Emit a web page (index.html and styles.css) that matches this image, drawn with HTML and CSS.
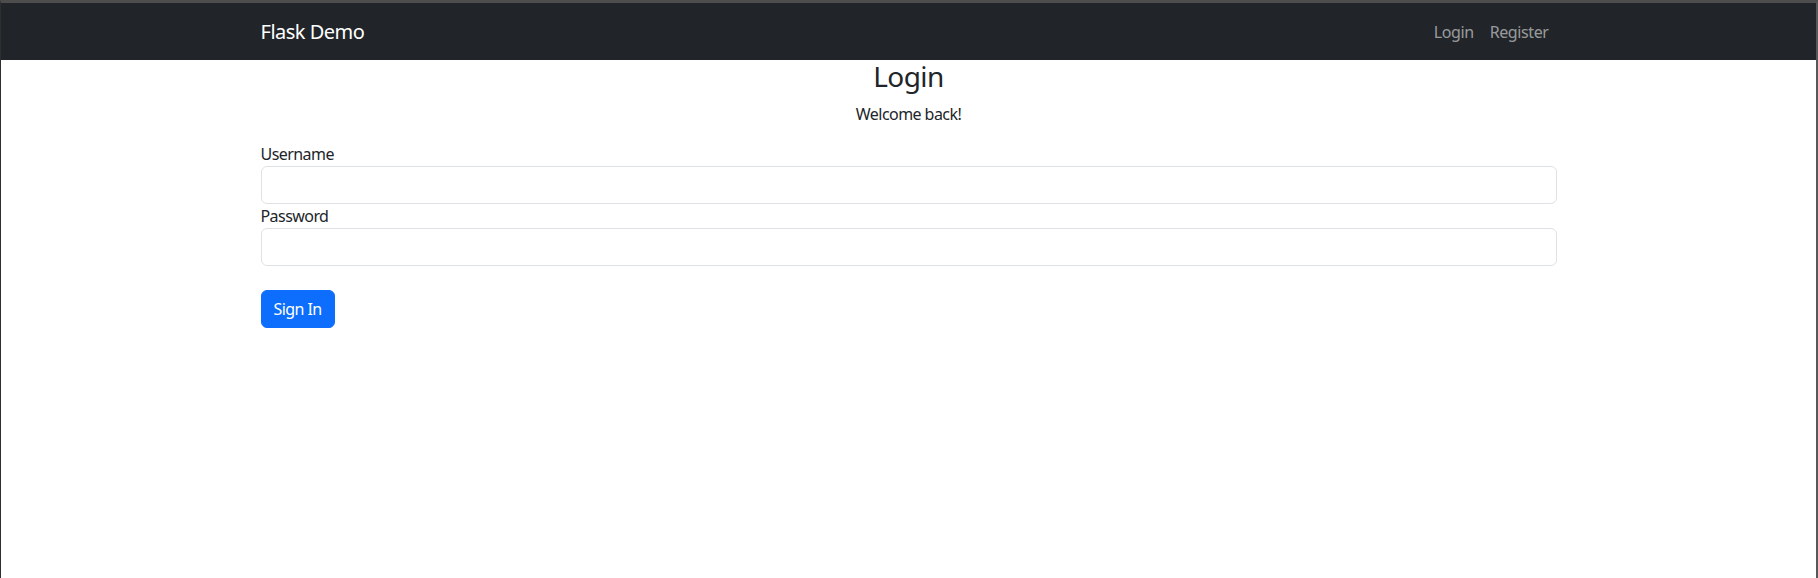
FILE: index.html
```html
<!DOCTYPE html>
<html lang="en">
<head>
<meta charset="utf-8">
<title>Login - Flask Demo</title>
<link rel="stylesheet" href="styles.css">
</head>
<body>
<div class="frame">
  <nav class="navbar">
    <div class="container nav-inner">
      <a class="brand" href="#">Flask Demo</a>
      <ul class="nav-links">
        <li><a class="nav-link" href="#">Login</a></li>
        <li><a class="nav-link" href="#">Register</a></li>
      </ul>
    </div>
  </nav>
  <main class="container">
    <h3 class="title">Login</h3>
    <p class="subtitle">Welcome back!</p>
    <form class="login-form">
      <label class="form-label" for="username">Username</label>
      <input class="form-control" type="text" id="username" name="username">
      <label class="form-label" for="password">Password</label>
      <input class="form-control" type="password" id="password" name="password">
      <button class="btn-primary" type="submit">Sign In</button>
    </form>
  </main>
</div>
</body>
</html>
```
FILE: styles.css
```css
*, *::before, *::after { box-sizing: border-box; }

html, body {
  margin: 0;
  padding: 0;
  height: 100%;
}

body {
  font-family: "Noto Sans", "DejaVu Sans", sans-serif;
  font-size: 16px;
  line-height: 1.5;
  letter-spacing: -0.035em;
  color: #212529;
  background: #ffffff;
}

.frame {
  min-height: 100%;
  border-top: 3px solid #4d4d4d;
  border-left: 1px solid #2e2e2e;
  border-right: 2px solid #585858;
  background: #ffffff;
}

.container {
  width: 100%;
  max-width: 1320px;
  margin: 0 auto;
  padding: 0 12px;
}

.navbar {
  background: #212529;
  height: 57px;
  display: flex;
  align-items: center;
}

.nav-inner {
  display: flex;
  align-items: center;
  justify-content: space-between;
}

.brand {
  color: #ffffff;
  font-size: 20px;
  line-height: 30px;
  letter-spacing: -0.025em;
  text-decoration: none;
}

.nav-links {
  list-style: none;
  margin: 0;
  padding: 0;
  display: flex;
}

.nav-link {
  display: block;
  padding: 8px 8px;
  color: rgba(255, 255, 255, 0.55);
  text-decoration: none;
  font-size: 16px;
  line-height: 24px;
  letter-spacing: -0.025em;
}

.title {
  margin: 0 0 8px;
  font-size: 28px;
  font-weight: 400;
  line-height: 1.2;
  text-align: center;
}

.subtitle {
  margin: 0 0 16px;
  text-align: center;
}

.login-form {
  display: flex;
  flex-direction: column;
  align-items: stretch;
}

.form-label {
  display: block;
  line-height: 24px;
}

.form-control {
  display: block;
  width: 100%;
  height: 38px;
  padding: 6px 12px;
  font: inherit;
  letter-spacing: inherit;
  color: #212529;
  background: #ffffff;
  border: 1px solid #dee2e6;
  border-radius: 6px;
  outline: none;
}

.btn-primary {
  align-self: flex-start;
  margin-top: 24px;
  height: 38px;
  padding: 6px 12px;
  font: inherit;
  letter-spacing: inherit;
  color: #ffffff;
  background: #0d6efd;
  border: 1px solid #0d6efd;
  border-radius: 6px;
  cursor: pointer;
}
```
